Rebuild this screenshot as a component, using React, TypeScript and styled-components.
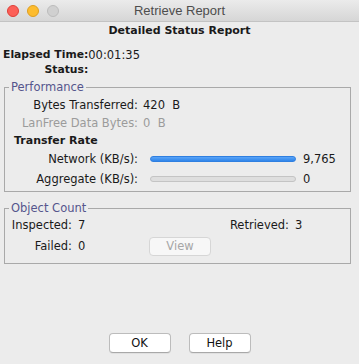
import { createGlobalStyle } from 'styled-components';
import styled from 'styled-components';

const GlobalStyle = createGlobalStyle`
  html, body {
    margin: 0;
    padding: 0;
    background: #ececec;
  }
  * {
    box-sizing: border-box;
  }
`;

const Window = styled.div`
  width: 359px;
  height: 364px;
  display: flex;
  flex-direction: column;
  background: #ececec;
  font-family: 'DejaVu Sans', 'Noto Sans', sans-serif;
  font-size: 11.5px;
  color: #1a1a1a;
  overflow: hidden;
`;

const TitleBar = styled.div`
  height: 22px;
  flex: none;
  display: grid;
  grid-template-columns: 1fr auto 1fr;
  align-items: center;
  padding: 0 7px;
  background: linear-gradient(#ebebeb, #d6d6d6);
  border-bottom: 1px solid #c3c3c3;
`;

const Lights = styled.div`
  display: flex;
  gap: 8px;
`;

const Light = styled.span<{ $fill: string; $edge: string }>`
  width: 12px;
  height: 12px;
  border-radius: 50%;
  background: ${(p) => p.$fill};
  border: 1px solid ${(p) => p.$edge};
`;

const WindowTitle = styled.div`
  font-family: 'Liberation Sans', Arial, sans-serif;
  font-size: 13px;
  color: #4d4d4d;
`;

const Body = styled.div`
  flex: 1;
  display: flex;
  flex-direction: column;
  padding: 0 8px 11px 4px;
`;

const Heading = styled.div`
  font-weight: bold;
  font-size: 11px;
  line-height: 18px;
  text-align: center;
  padding-left: 4px;
`;

const InfoGrid = styled.div`
  display: grid;
  grid-template-columns: max-content auto;
  grid-auto-rows: 15px;
  align-items: center;
  margin: 7px 0 0 -1px;
`;

const InfoLabel = styled.span`
  font-weight: bold;
  font-size: 10.8px;
  text-align: right;
  white-space: nowrap;
`;

const Group = styled.fieldset<{ $gap: number; $top: number }>`
  margin: ${(p) => p.$gap}px 0 0 0;
  padding: ${(p) => p.$top}px 0 2px 0;
  border: 1px solid #a9a9a9;
  min-width: 0;
`;

const Legend = styled.legend`
  margin-left: 4px;
  padding: 0 2px;
  line-height: 14px;
  color: #55558c;
`;

const StatRow = styled.div<{ $h: number; $muted?: boolean }>`
  display: grid;
  grid-template-columns: 133px auto;
  column-gap: 5px;
  align-items: center;
  height: ${(p) => p.$h}px;
  color: ${(p) => (p.$muted ? '#9b9b9b' : 'inherit')};
`;

const RightLabel = styled.span`
  text-align: right;
  white-space: nowrap;
`;

const SubHeading = styled.div`
  font-weight: bold;
  font-size: 11px;
  height: 17px;
  line-height: 17px;
  padding-left: 9px;
`;

const RateRow = styled.div`
  display: grid;
  grid-template-columns: 133px 158px auto;
  align-items: center;
  height: 20px;
`;

const Track = styled.div<{ $active: boolean }>`
  margin-left: 12px;
  height: 6px;
  border-radius: 3px;
  background: ${(p) =>
    p.$active ? 'linear-gradient(#5aa4f8, #2f85ea)' : '#dedede'};
  border: 1px solid ${(p) => (p.$active ? '#2f7fe0' : '#c4c4c4')};
`;

const RateValue = styled.span`
  padding-left: 7px;
`;

const CountGrid = styled.div`
  display: grid;
  grid-template-columns: 67px 77px 62px 78px auto;
  grid-template-rows: 20px 22px;
  align-items: center;
  padding-bottom: 4px;
`;

const Value = styled.span`
  padding-left: 6px;
`;

const SmallButton = styled.button`
  height: 19px;
  width: 62px;
  padding: 0;
  font-family: inherit;
  font-size: 11.5px;
  color: #a6a6a6;
  background: #f7f7f7;
  border: 1px solid #d6d6d6;
  border-radius: 4px;
`;

const Footer = styled.div`
  margin-top: auto;
  display: flex;
  justify-content: center;
  gap: 18px;
  padding-left: 4px;
`;

const DialogButton = styled.button`
  width: 62px;
  height: 20px;
  padding: 0;
  font-family: inherit;
  font-size: 11.5px;
  color: #111;
  background: #ffffff;
  border: 1px solid #bcbcbc;
  border-bottom-color: #a8a8a8;
  border-radius: 4px;
  box-shadow: 0 1px 0 rgba(0, 0, 0, 0.05);
`;

export default function App() {
  return (
    <Window>
      <GlobalStyle />
      <TitleBar>
        <Lights>
          <Light $fill="#fc5f57" $edge="#de3f38" />
          <Light $fill="#fdbc2e" $edge="#de9f20" />
          <Light $fill="#d0d0d0" $edge="#bcbcbc" />
        </Lights>
        <WindowTitle>Retrieve Report</WindowTitle>
        <span />
      </TitleBar>
      <Body>
        <Heading>Detailed Status Report</Heading>
        <InfoGrid>
          <InfoLabel>Elapsed Time:</InfoLabel>
          <span>00:01:35</span>
          <InfoLabel>Status:</InfoLabel>
          <span />
        </InfoGrid>

        <Group $gap={3} $top={2}>
          <Legend>Performance</Legend>
          <StatRow $h={18}>
            <RightLabel>Bytes Transferred:</RightLabel>
            <span>420&nbsp; B</span>
          </StatRow>
          <StatRow $h={18} $muted>
            <RightLabel>LanFree Data Bytes:</RightLabel>
            <span>0&nbsp; B</span>
          </StatRow>
          <SubHeading>Transfer Rate</SubHeading>
          <RateRow>
            <RightLabel>Network (KB/s):</RightLabel>
            <Track $active />
            <RateValue>9,765</RateValue>
          </RateRow>
          <RateRow>
            <RightLabel>Aggregate (KB/s):</RightLabel>
            <Track $active={false} />
            <RateValue>0</RateValue>
          </RateRow>
        </Group>

        <Group $gap={9} $top={0}>
          <Legend>Object Count</Legend>
          <CountGrid>
            <RightLabel>Inspected:</RightLabel>
            <Value>7</Value>
            <span />
            <RightLabel>Retrieved:</RightLabel>
            <Value>3</Value>
            <RightLabel>Failed:</RightLabel>
            <Value>0</Value>
            <SmallButton disabled>View</SmallButton>
            <span />
            <span />
          </CountGrid>
        </Group>

        <Footer>
          <DialogButton>OK</DialogButton>
          <DialogButton>Help</DialogButton>
        </Footer>
      </Body>
    </Window>
  );
}
